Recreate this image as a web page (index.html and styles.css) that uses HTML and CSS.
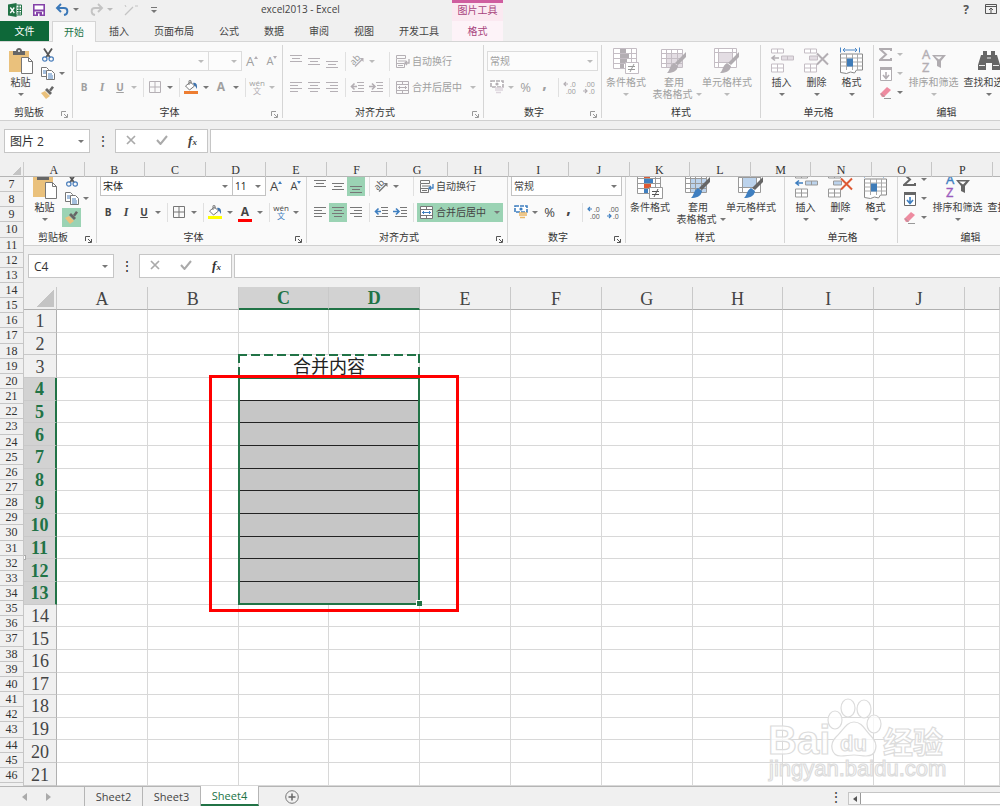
FILE: index.html
```html
<!DOCTYPE html>
<html lang="zh-CN">
<head>
    <meta charset="UTF-8">
    <meta name="viewport" content="width=device-width, initial-scale=1.0">
    <title>excel2013 - Excel</title>
    <link rel="stylesheet" href="styles.css">
</head>
<body>
    <!-- Icon set -->
    <svg class="icon-defs" aria-hidden="true">
        <symbol id="i-paste" viewBox="0 0 24 26">
            <path d="M0 3h20v21H0z" fill="#eac17c"/>
            <path d="M4 3h3c0-4 6-4 6 0h3v4H4z" fill="#666"/><circle cx="10" cy="3" r="1" fill="#fff"/>
            <path d="M12.500 9.500h7l4 4v12h-11z" fill="#fff" stroke="#777"/><path d="M19.500 9.500v4h4" fill="none" stroke="#777"/>
        </symbol>
        <symbol id="i-cut" viewBox="0 0 12 14">
            <path d="M2 .5l6 9M10 .5l-6 9" stroke="#555" stroke-width="1.800"/>
            <circle cx="2.800" cy="11" r="2.200" fill="none" stroke="#4a7ebb" stroke-width="1.200"/><circle cx="9.200" cy="11" r="2.200" fill="none" stroke="#4a7ebb" stroke-width="1.200"/>
        </symbol>
        <symbol id="i-copy" viewBox="0 0 14 13">
            <path d="M.5.500h5l2 2v7h-7z" fill="#fff" stroke="#777"/><path d="M2 4h3M2 6h3" stroke="#4a7ebb"/>
            <path d="M5.500 3.500h5l3 3v6h-8z" fill="#fff" stroke="#777"/><path d="M7 7h4M7 9h5M7 11h5" stroke="#4a7ebb"/>
        </symbol>
        <symbol id="i-painter" viewBox="0 0 14 13">
            <path d="M0 7l4-2 5 5-4 3z" fill="#eac17c"/><path d="M4 4l2-2 5 5-2 2z" fill="#666"/><path d="M8 4l3-4 2 1.500-3 4z" fill="#666"/>
        </symbol>
        <symbol id="i-border" viewBox="0 0 12 12"><path d="M.5.500h11v11H.5zM6 .5v11M.5 6h11" fill="none" stroke="var(--ink)"/></symbol>
        <symbol id="i-bucket" viewBox="0 0 14 14">
            <path d="M1.500 6l5-4 4 4-5 4z" fill="#fff" stroke="#777"/><path d="M5 5V1c0-1 2-1 2 0v3" fill="none" stroke="#777"/>
            <path d="M9 3c3-1 4.500 1 4 6-1-1-1-3-2.500-3z" fill="#3f73ad"/><path d="M0 11h14v3H0z" fill="var(--fill)"/>
        </symbol>
        <symbol id="i-top" viewBox="0 0 13 13"><path d="M0 .5h12M2 3.500h8M0 6.500h12" stroke="var(--ink)"/></symbol>
        <symbol id="i-middle" viewBox="0 0 13 13"><path d="M0 3.500h12M2 6.500h8M0 9.500h12" stroke="var(--ink)"/></symbol>
        <symbol id="i-bottom" viewBox="0 0 13 13"><path d="M0 6.500h12M2 9.500h8M0 12.500h12" stroke="var(--ink)"/></symbol>
        <symbol id="i-left" viewBox="0 0 13 13"><path d="M0 1.500h12M0 4.500h8M0 7.500h12M0 10.500h8" stroke="var(--ink)"/></symbol>
        <symbol id="i-center" viewBox="0 0 13 13"><path d="M0 1.500h12M2 4.500h8M0 7.500h12M2 10.500h8" stroke="var(--ink)"/></symbol>
        <symbol id="i-right" viewBox="0 0 13 13"><path d="M0 1.500h12M4 4.500h8M0 7.500h12M4 10.500h8" stroke="var(--ink)"/></symbol>
        <symbol id="i-outdent" viewBox="0 0 14 12"><path d="M7 1.500h7M8 4.500h6M8 7.500h6M2 10.500h12" stroke="var(--ink)"/><path d="M7 5.500H2M4.500 2.500l-3 3 3 3" fill="none" stroke="var(--accent)" stroke-width="1.600"/></symbol>
        <symbol id="i-indent" viewBox="0 0 14 12"><path d="M7 1.500h7M8 4.500h6M8 7.500h6M2 10.500h12" stroke="var(--ink)"/><path d="M0 5.500h5M3 2.500l3 3-3 3" fill="none" stroke="var(--accent)" stroke-width="1.600"/></symbol>
        <symbol id="i-wrap" viewBox="0 0 14 13">
            <path d="M.5.500h9v3h-9zM.5 8.500h8v4h-8zM.5 4v5" fill="none" stroke="var(--ink)"/><path d="M2 6h8M2 10.500h5" stroke="var(--ink)"/>
            <path d="M13 4v4H9M11 6L9 8l2 2" fill="none" stroke="var(--accent)" stroke-width="1.300"/>
        </symbol>
        <symbol id="i-merge" viewBox="0 0 14 13">
            <path d="M.5.500h12v12H.5zM.5 3.500h12M.5 9.500h12M6.500.500v3M6.500 9.500v3" fill="var(--paper)" stroke="var(--ink)"/>
            <path d="M2 6.500h9M4 5L2.500 6.500 4 8M9 5l1.500 1.500L9 8" fill="none" stroke="var(--accent)"/>
        </symbol>
        <symbol id="i-money" viewBox="0 0 14 14">
            <path d="M1 1h12v6H1z" fill="#fff" stroke="var(--accent)" stroke-width="1.600" stroke-dasharray="4 1"/><circle cx="7" cy="4" r="1.600" fill="var(--accent)"/>
            <path d="M5 8h8M5 10h8M6 12.500h5" stroke="var(--coin)" stroke-width="1.600"/>
        </symbol>
        <symbol id="i-cond" viewBox="0 0 26 26">
            <path d="M.5.500h23v20H.5zM.5 5.500h23M.5 10.500h23M.5 15.500h23M7.500.500v20M18.500.500v20" fill="#fff" stroke="var(--line)"/>
            <path d="M7 1h6v4H7zM7 11h7v4H7z" fill="var(--hot)"/><path d="M7 6h9v4H7zM7 16h4v4H7z" fill="var(--accent)"/>
            <path d="M12.500 14.500h13v11h-13z" fill="#fff" stroke="var(--line)"/><path d="M15 18.500h7M15 21.500h7M21 16l-4 8" stroke="var(--dark)"/>
        </symbol>
        <symbol id="i-tstyle" viewBox="0 0 26 26">
            <path d="M.5 1.500h21v18H.5z" fill="#fff" stroke="var(--line)"/><path d="M5 6h16v13H5z" fill="var(--soft)"/>
            <path d="M.5 5.500h21M.5 10.500h21M.5 15.500h21M5.500 1.500v18M10.500 1.500v18M16.500 1.500v18" stroke="var(--line)"/>
            <path d="M25 4v5l-8 8-3-2z" fill="var(--brush)"/><path d="M13 15l4 3c-1 6-6 7-11 7 3-2 2-7 7-10z" fill="var(--accent)"/>
        </symbol>
        <symbol id="i-cstyle" viewBox="0 0 26 26">
            <path d="M.5.500h22v19H.5z" fill="#fff" stroke="var(--line)"/><path d="M4.500 4.500h14v10h-14z" fill="var(--soft)" stroke="var(--line)"/>
            <path d="M.5 4.500h4M.5 14.500h4M18 4.500h4M4.500.500v4M18.500.500v4M4.500 14v5" stroke="var(--line)"/>
            <path d="M25 4v5l-8 8-3-2z" fill="var(--brush)"/><path d="M13 15l4 3c-1 6-6 7-11 7 3-2 2-7 7-10z" fill="var(--accent)"/>
        </symbol>
        <symbol id="i-insert" viewBox="0 0 24 25">
            <path d="M1.500.500h12v4h-12zM7.500.500v4M1.500 15.500h12v8h-12zM7.500 15.500v8M1.500 19.500h12" fill="#fff" stroke="var(--line)"/>
            <path d="M11.500 7.500h12v4h-12zM17.500 7.500v4" fill="var(--soft)" stroke="var(--line)"/><path d="M9 9.500H3M5 7l-3 2.500L5 12" fill="none" stroke="var(--accent)" stroke-width="1.600"/>
        </symbol>
        <symbol id="i-delete" viewBox="0 0 26 25">
            <path d="M.5.500h12v4H.5zM6.500.500v4M.5 15.500h12v8H.5zM6.500 15.500v8M.5 19.500h12" fill="#fff" stroke="var(--line)"/>
            <path d="M5.500 7.500h8v4h-8z" fill="var(--soft)" stroke="var(--line)"/><path d="M13 5l11 11M24 5L13 16" stroke="var(--hot)" stroke-width="2"/>
        </symbol>
        <symbol id="i-format" viewBox="0 0 24 27">
            <path d="M.5 0v5M19.500 0v5M3 2.500h14M5 .5l-2 2 2 2M15 .5l2 2-2 2" fill="none" stroke="#4a86c5"/>
            <path d="M.5 6.500h22v16l-6 0-2 3-4-1-4 1.500-6-1z" fill="#fff" stroke="#888"/><path d="M.5 10.500h22M.5 14.500h22M.5 18.500h22M6.500 6.500v16M12.500 6.500v16M17.500 6.500v16" stroke="#aaa"/>
            <path d="M7 11h6v8H7z" fill="#3f7cb8"/>
        </symbol>
        <symbol id="i-sum" viewBox="0 0 13 13"><path d="M12 3V1H1l6 5.500L1 12h11v-2" fill="none" stroke="var(--brush)" stroke-width="2"/></symbol>
        <symbol id="i-filldown" viewBox="0 0 12 14"><path d="M.5.500h11v13H.5z" fill="#fff" stroke="var(--brush)"/><path d="M0 0h12v3H0z" fill="var(--brush)"/><path d="M6 5v6M3 8l3 3.500L9 8" fill="none" stroke="var(--accent)" stroke-width="1.600"/></symbol>
        <symbol id="i-eraser" viewBox="0 0 12 12"><path d="M0 7l7-7 4 3-7 7H2z" fill="#ee8ba0"/><path d="M1 6.500l3.500 3.500M4 11.500h7" stroke="#999"/></symbol>
        <symbol id="i-find" viewBox="0 0 24 22">
            <path d="M6 1h4v4h4V1h4v4h2l3 10v5h-8v-7h-6v7H1v-5L4 5h2z" fill="#666"/><path d="M2 15.500h6M16 15.500h6M10 8h4" stroke="#eee"/>
        </symbol>
        <symbol id="i-launch" viewBox="0 0 7 7"><path d="M.5 5V.5H5M3 3l3 3M6.500 3v3.500H3" fill="none" stroke="var(--dark)"/></symbol>
        <symbol id="i-cross" viewBox="0 0 10 10"><path d="M1 1l8 8M9 1L1 9" stroke="#aaa" stroke-width="1.700"/></symbol>
        <symbol id="i-check" viewBox="0 0 12 10"><path d="M1 5l3.500 4L11 1" fill="none" stroke="#aaa" stroke-width="2"/></symbol>
    </svg>

    <header class="titlebar">
        <div class="quick-access">
            <svg width="14" height="14" viewBox="0 0 14 14" role="img" aria-label="Excel"><path d="M8 2h5.500v10H8" fill="#fff" stroke="#217346"/><path d="M9 5h4M9 7.500h4M9 10h4M11 2v10" stroke="#217346"/><path d="M0 1.500L8.500 0v14L0 12.500z" fill="#217346"/><path d="M2.300 4.500l4 5.500M6.300 4.500l-4 5.500" stroke="#fff" stroke-width="1.300"/></svg>
            <button type="button" aria-label="保存"><svg width="12" height="12" viewBox="0 0 12 12"><path d="M.8.800h10.400v10.400H.8z" fill="#fff" stroke="#8442a8" stroke-width="1.600"/><path d="M1 5.500h10v2H1z" fill="#8442a8"/><path d="M3 8h6v4H3z" fill="#8442a8"/><path d="M5 9.500h1.500V12H5z" fill="#fff"/></svg></button>
            <button type="button" aria-label="撤消" class="undo"><svg width="13" height="12" viewBox="0 0 13 12"><path d="M5 0L1 4l4 4M1.500 4H8c4.500 0 4.500 6 0 7" fill="none" stroke="#3b78b8" stroke-width="1.900"/></svg><i class="arrow"></i></button>
            <button type="button" aria-label="恢复" class="redo"><svg width="13" height="12" viewBox="0 0 13 12"><path d="M8 0l4 4-4 4M11.500 4H5C.5 4 .5 10 5 11" fill="none" stroke="#c4c4c4" stroke-width="1.900"/></svg><i class="arrow faint"></i></button>
            <svg width="14" height="12" viewBox="0 0 14 12"><path d="M1 11l8-8" stroke="#c4c4c4" stroke-width="1.300"/><path d="M1 1l1 2M11 2h3" stroke="#c4c4c4"/></svg>
            <button type="button" aria-label="自定义快速访问工具栏" class="customize"><i class="arrow"></i></button>
        </div>
        <h1 class="title">excel2013 - Excel</h1>
        <div class="context-title">图片工具</div>
        <div class="window-buttons">
            <button type="button" aria-label="帮助">?</button>
            <button type="button" aria-label="功能区显示选项"><svg width="12" height="10" viewBox="0 0 12 10"><path d="M.5.500h11v9H.5zM.5 2.500h11" fill="none" stroke="#555"/><path d="M6 4v5M4 6l2-2 2 2" fill="none" stroke="#555"/></svg></button>
        </div>
    </header>

    <nav class="tabs">
        <button type="button" class="file-tab">文件</button>
        <button type="button" class="tab active">开始</button>
        <button type="button" class="tab">插入</button>
        <button type="button" class="tab">页面布局</button>
        <button type="button" class="tab">公式</button>
        <button type="button" class="tab">数据</button>
        <button type="button" class="tab">审阅</button>
        <button type="button" class="tab">视图</button>
        <button type="button" class="tab">开发工具</button>
        <button type="button" class="tab context-tab">格式</button>
    </nav>

    <div class="ribbon dimmed" data-font="" data-size=""></div>

    <div class="formula-bar">
        <label class="name-box"><input type="text" value="图片 2" aria-label="名称框"><i class="arrow"></i></label>
        <span class="dots">⋮</span>
        <div class="formula-buttons">
            <button type="button" aria-label="取消"><svg width="10" height="10"><use href="#i-cross"/></svg></button>
            <button type="button" aria-label="输入"><svg width="12" height="10"><use href="#i-check"/></svg></button>
            <button type="button" class="fx" aria-label="插入函数">f<sub>x</sub></button>
        </div>
        <input type="text" class="formula-input" aria-label="编辑栏">
    </div>

    <main class="sheet">
        <div class="corner"></div>
        <div class="col-heads" id="colHeads"></div>
        <div class="row-heads" id="rowHeads"></div>

        <!-- Inserted picture: a second Excel window -->
        <div class="picture">
            <div class="ribbon-clip">
                <div class="ribbon" data-font="宋体" data-size="11"></div>
            </div>
            <div class="formula-bar">
                <label class="name-box"><input type="text" value="C4" aria-label="名称框"><i class="arrow"></i></label>
                <span class="dots">⋮</span>
                <div class="formula-buttons">
                    <button type="button" aria-label="取消"><svg width="10" height="10"><use href="#i-cross"/></svg></button>
                    <button type="button" aria-label="输入"><svg width="12" height="10"><use href="#i-check"/></svg></button>
                    <button type="button" class="fx" aria-label="插入函数">f<sub>x</sub></button>
                </div>
                <input type="text" class="formula-input" aria-label="编辑栏">
            </div>
            <div class="grid-wrap">
                <table class="grid" id="grid"></table>
            </div>
            <svg class="watermark" width="184" height="92" viewBox="0 0 184 92">
                <g fill="#fff" fill-opacity=".75" stroke="#dcdcdc" stroke-width="1.200">
                    <text x="2" y="58" class="mark-latin" font-size="40">Bai</text>
                    <ellipse cx="69" cy="24" rx="7" ry="9"/><ellipse cx="82" cy="12" rx="7" ry="9"/><ellipse cx="98" cy="13" rx="7" ry="9"/><ellipse cx="108" cy="28" rx="7" ry="9"/>
                    <path d="M88 26c8 0 11 8 17 14 8 8 6 20-5 20-5 0-7-1-12-1s-8 1-13 1c-10 0-12-12-5-19 7-6 10-15 18-15z"/>
                    <text x="74" y="55" class="mark-latin" font-size="22">du</text>
                    <text x="117" y="57" class="mark-cjk" font-size="30">经验</text>
                    <text x="3" y="80" font-size="22" class="mark-url">jingyan.baidu.com</text>
                </g>
            </svg>
            <i class="handle"></i>
        </div>
    </main>

    <footer class="sheet-bar">
        <button type="button" class="nav" aria-label="上一张"><svg width="5" height="8"><path d="M5 0v8L0 4z" fill="#aaa"/></svg></button>
        <button type="button" class="nav" aria-label="下一张"><svg width="5" height="8"><path d="M0 0v8l5-4z" fill="#aaa"/></svg></button>
        <div class="sheet-tabs">
            <button type="button" class="sheet-tab">Sheet2</button>
            <button type="button" class="sheet-tab">Sheet3</button>
            <button type="button" class="sheet-tab current">Sheet4</button>
        </div>
        <button type="button" class="add-sheet" aria-label="新工作表"><svg width="14" height="14" viewBox="0 0 14 14"><circle cx="7" cy="7" r="6.300" fill="none" stroke="#777"/><path d="M7 3.500v7M3.500 7h7" stroke="#666" stroke-width="1.500"/></svg></button>
        <span class="dots">⋮</span>
        <div class="scrollbar"><button type="button" aria-label="向左滚动"><svg width="4" height="6"><path d="M4 0v6L0 3z" fill="#555"/></svg></button></div>
    </footer>

    <template id="ribbonTemplate">
        <section class="group clipboard">
            <div class="group-body">
                <button type="button" class="big"><svg width="24" height="26"><use href="#i-paste"/></svg><span>粘贴</span><i class="arrow"></i></button>
                <div class="stack">
                    <div><button type="button" class="tool" aria-label="剪切"><svg width="12" height="14"><use href="#i-cut"/></svg></button></div>
                    <div><button type="button" class="tool" aria-label="复制"><svg width="14" height="13"><use href="#i-copy"/></svg></button><i class="arrow"></i></div>
                    <div><button type="button" class="tool on" aria-label="格式刷"><svg width="14" height="13"><use href="#i-painter"/></svg></button></div>
                </div>
            </div>
            <h2>剪贴板</h2><svg class="launch"><use href="#i-launch"/></svg>
        </section>
        <section class="group font muted">
            <div class="row">
                <label class="combo font-name"><select aria-label="字体"><option></option></select><i class="arrow"></i></label>
                <label class="combo font-size"><select aria-label="字号"><option></option></select><i class="arrow"></i></label>
                <button type="button" class="tool grow" aria-label="增大字号">A<i class="tip up"></i></button>
                <button type="button" class="tool shrink" aria-label="减小字号">A<i class="tip"></i></button>
            </div>
            <div class="row">
                <button type="button" class="tool bold">B</button>
                <button type="button" class="tool italic">I</button>
                <button type="button" class="tool underline">U</button><i class="arrow"></i>
                <span class="sep"></span>
                <button type="button" class="tool wide" aria-label="边框"><svg width="12" height="12"><use href="#i-border"/></svg></button><i class="arrow dark"></i>
                <span class="sep"></span>
                <button type="button" class="tool wide" aria-label="填充颜色"><svg width="14" height="14"><use href="#i-bucket"/></svg></button><i class="arrow dark"></i>
                <button type="button" class="tool wide font-color">A</button><i class="arrow dark"></i>
                <span class="sep"></span>
                <button type="button" class="tool wide pinyin"><span>wén</span><span>文</span></button><i class="arrow"></i>
            </div>
            <h2>字体</h2><svg class="launch"><use href="#i-launch"/></svg>
        </section>
        <section class="group align muted">
            <div class="row">
                <button type="button" class="tool" aria-label="顶端对齐"><svg width="13" height="13"><use href="#i-top"/></svg></button>
                <button type="button" class="tool" aria-label="垂直居中"><svg width="13" height="13"><use href="#i-middle"/></svg></button>
                <button type="button" class="tool on" aria-label="底端对齐"><svg width="13" height="13"><use href="#i-bottom"/></svg></button>
                <span class="sep"></span>
                <button type="button" class="tool wide" aria-label="方向">
                    <svg width="14" height="14" viewBox="0 0 14 14">
                        <text x="0" y="9" font-size="9" transform="rotate(-45 5 6)" fill="var(--dark)">ab</text>
                        <path d="M5 12.500l7-7" stroke="var(--ink)" stroke-width="1.500"/><path d="M13.500 4v4l-4-4z" fill="var(--ink)"/>
                    </svg>
                </button><i class="arrow"></i><span class="fill"></span>
                <span class="sep"></span>
                <button type="button" class="text-tool"><svg width="14" height="13"><use href="#i-wrap"/></svg>自动换行</button>
            </div>
            <div class="row">
                <button type="button" class="tool" aria-label="左对齐"><svg width="13" height="13"><use href="#i-left"/></svg></button>
                <button type="button" class="tool on" aria-label="居中"><svg width="13" height="13"><use href="#i-center"/></svg></button>
                <button type="button" class="tool" aria-label="右对齐"><svg width="13" height="13"><use href="#i-right"/></svg></button>
                <span class="sep"></span>
                <button type="button" class="tool wide" aria-label="减少缩进量"><svg width="14" height="12"><use href="#i-outdent"/></svg></button>
                <button type="button" class="tool" aria-label="增加缩进量"><svg width="14" height="12"><use href="#i-indent"/></svg></button><span class="fill"></span>
                <span class="sep"></span>
                <button type="button" class="text-tool on"><svg width="14" height="13"><use href="#i-merge"/></svg>合并后居中<i class="arrow"></i></button>
            </div>
            <h2>对齐方式</h2><svg class="launch"><use href="#i-launch"/></svg>
        </section>
        <section class="group number muted">
            <div class="row">
                <label class="combo number-format"><select aria-label="数字格式"><option>常规</option></select><i class="arrow"></i></label>
            </div>
            <div class="row">
                <button type="button" class="tool" aria-label="会计数字格式"><svg width="14" height="14"><use href="#i-money"/></svg></button><i class="arrow"></i>
                <button type="button" class="tool percent">%</button>
                <button type="button" class="tool comma">,</button>
                <span class="sep"></span>
                <button type="button" class="tool" aria-label="增加小数位数">
                    <svg width="14" height="13" viewBox="0 0 14 13">
                        <path d="M5 3H1M3 1L1 3l2 2" fill="none" stroke="var(--accent)" stroke-width="1.200"/>
                        <text x="7" y="6" font-size="7" fill="var(--dark)">.0</text><text x="3" y="13" font-size="7" fill="var(--dark)">.00</text>
                    </svg>
                </button>
                <button type="button" class="tool" aria-label="减少小数位数">
                    <svg width="14" height="13" viewBox="0 0 14 13">
                        <text x="3" y="6" font-size="7" fill="var(--dark)">.00</text><text x="7" y="13" font-size="7" fill="var(--dark)">.0</text>
                        <path d="M1 10h4M3 8l2 2-2 2" fill="none" stroke="var(--accent)" stroke-width="1.200"/>
                    </svg>
                </button>
            </div>
            <h2>数字</h2><svg class="launch"><use href="#i-launch"/></svg>
        </section>
        <section class="group style muted">
            <div class="group-body">
                <button type="button" class="big"><svg width="26" height="26"><use href="#i-cond"/></svg><span>条件格式</span><i class="arrow"></i></button>
                <button type="button" class="big"><svg width="26" height="26"><use href="#i-tstyle"/></svg><span>套用</span><span class="two-line">表格格式<i class="arrow"></i></span></button>
                <button type="button" class="big wide"><svg width="26" height="26"><use href="#i-cstyle"/></svg><span>单元格样式</span><i class="arrow"></i></button>
            </div>
            <h2>样式</h2>
        </section>
        <section class="group cells">
            <div class="group-body">
                <button type="button" class="big"><svg width="24" height="25"><use href="#i-insert"/></svg><span>插入</span><i class="arrow"></i></button>
                <button type="button" class="big"><svg width="26" height="25"><use href="#i-delete"/></svg><span>删除</span><i class="arrow"></i></button>
                <button type="button" class="big"><svg width="24" height="27"><use href="#i-format"/></svg><span>格式</span><i class="arrow"></i></button>
            </div>
            <h2>单元格</h2>
        </section>
        <section class="group edit">
            <div class="group-body">
                <div class="stack">
                    <div class="muted"><button type="button" class="tool" aria-label="自动求和"><svg width="13" height="13"><use href="#i-sum"/></svg></button><i class="arrow"></i></div>
                    <div class="muted"><button type="button" class="tool" aria-label="填充"><svg width="12" height="14"><use href="#i-filldown"/></svg></button><i class="arrow"></i></div>
                    <div><button type="button" class="tool" aria-label="清除"><svg width="12" height="12"><use href="#i-eraser"/></svg></button><i class="arrow"></i></div>
                </div>
                <button type="button" class="big muted">
                    <svg width="26" height="26" viewBox="0 0 26 26">
                        <text x="1" y="11" font-size="13" fill="var(--accent)" stroke="var(--accent)" stroke-width=".4">A</text>
                        <text x="1" y="24" font-size="13" fill="var(--purple)" stroke="var(--purple)" stroke-width=".4">Z</text>
                        <path d="M11 7h14l-5 6v7l-4-2v-5z" fill="var(--brush)"/><path d="M14 8.500h7l-3 3z" fill="var(--paper)"/>
                    </svg><span>排序和筛选</span><i class="arrow"></i>
                </button>
                <button type="button" class="big"><svg width="24" height="22"><use href="#i-find"/></svg><span>查找和选择</span><i class="arrow"></i></button>
            </div>
            <h2>编辑</h2>
        </section>
    </template>

    <script src="script.js"></script>
</body>
</html>
```
FILE: styles.css
```css
* {
    margin: 0;
    padding: 0;
    box-sizing: border-box;
}

body {
    display: flex;
    flex-direction: column;
    height: 100vh;
    overflow: hidden;
    font-family: "Open Sans", "Noto Sans CJK SC", sans-serif;
    font-size: 10px;
    line-height: 12px;
    color: #444;
    background: #f0f0f0;
}

button, input, select {
    font: inherit;
    color: inherit;
    background: none;
    border: none;
    border-radius: 0;
    outline: none;
    appearance: none;
    white-space: nowrap;
}

svg {
    flex: none;
    overflow: visible;
}

.icon-defs {
    position: absolute;
    width: 0;
    height: 0;
}

.arrow {
    flex: none;
    width: 0;
    height: 0;
    border: 3px solid transparent;
    border-top-color: #777;
    border-bottom: none;
}

.arrow.faint {
    border-top-color: #bbb;
}

/* Title bar */
.titlebar {
    display: flex;
    height: 21px;
}

.quick-access {
    display: flex;
    align-items: center;
    gap: 11px;
    width: 261px;
    height: 19px;
    padding-left: 8px;
}

.quick-access button {
    display: flex;
    align-items: center;
    gap: 4px;
}

.quick-access .customize {
    margin-left: 2px;
    padding-top: 2px;
    border-top: 1px solid #777;
}

.title {
    width: 191px;
    font-size: 10px;
    font-weight: normal;
    line-height: 19px;
}

.context-title {
    width: 51px;
    border-top: 3px solid #cf5d9f;
    background: #fbe9f1;
    color: #a8447d;
    line-height: 15px;
    text-align: center;
}

.window-buttons {
    display: flex;
    align-items: center;
    gap: 16px;
    height: 19px;
    margin-left: auto;
    padding-right: 3px;
    font-size: 12px;
    font-weight: bold;
    color: #555;
}

/* Ribbon tabs */
.tabs {
    display: flex;
    gap: 1px;
    height: 21px;
    border-bottom: 1px solid #d5d5d5;
}

.file-tab {
    width: 49px;
    margin-right: 2px;
    background: #0e6839;
    color: #fff;
}

.tab {
    padding: 0 12px;
}

.tab.active {
    height: 21px;
    border: 1px solid #d5d5d5;
    border-bottom: none;
    padding: 0 11px;
    background: #fafafa;
    color: #217346;
}

.context-tab {
    width: 51px;
    background: #fdf3f8;
    color: #a8447d;
}

/* Ribbon */
.ribbon {
    --ink: #777;
    --dark: #555;
    --line: #999;
    --brush: #666;
    --accent: #3f7fc0;
    --soft: #bcd3ec;
    --hot: #dd5a34;
    --coin: #eab766;
    --purple: #9a5bbd;
    --fill: #ffff00;
    --paper: #fff;
    --muted: #444;
    --arrow: #777;
    --combo: #c3c3c3;
    display: flex;
    flex: none;
    height: 79px;
    overflow: hidden;
    background: #fafafa;
    border-bottom: 1px solid #d0d0d0;
}

.ribbon.dimmed {
    --ink: #b5b0b5;
    --dark: #999;
    --line: #c4bdc4;
    --brush: #b0acb0;
    --accent: #b3aeb3;
    --soft: #e3dde3;
    --hot: #b3aeb3;
    --coin: #ddd5dd;
    --purple: #b3aeb3;
    --fill: #ed7d31;
    --paper: #fafafa;
    --muted: #a0a0a0;
    --arrow: #bbb;
    --combo: #dcdcdc;
}

.group {
    position: relative;
    display: flex;
    flex: none;
    flex-direction: column;
    height: 73px;
    margin-top: 3px;
    border-right: 1px solid #d5d5d5;
}

.group h2 {
    margin-top: auto;
    font-size: 10px;
    font-weight: normal;
    line-height: 12px;
    text-align: center;
    color: #333;
}

.launch {
    position: absolute;
    right: 4px;
    bottom: 0;
    width: 7px;
    height: 7px;
}

.muted {
    color: var(--muted);
}

.muted .arrow {
    border-top-color: var(--arrow);
}

.muted .arrow.dark {
    border-top-color: #777;
}

.clipboard { width: 73px; padding-left: 3px; }
.font { width: 210px; padding-left: 2px; }
.align { width: 201px; padding-left: 4px; }
.number { width: 118px; padding-left: 3px; }
.style { width: 159px; }
.cells { width: 113px; padding-left: 3px; }
.edit { width: 143px; padding-left: 2px; border-right: none; }

.clipboard h2 { padding-right: 17px; }
.font h2 { padding-right: 18px; }
.align h2 { padding-right: 20px; }
.number h2 { padding-right: 20px; }

.group-body {
    display: flex;
}

.big {
    display: flex;
    flex: none;
    flex-direction: column;
    align-items: center;
    height: 60px;
}

.big svg {
    height: 28px;
    margin: 2px 0 1px;
}

.big .arrow {
    margin-top: 5px;
}

.two-line {
    display: flex;
    align-items: center;
    gap: 3px;
    margin-left: 6px;
}

.two-line .arrow {
    margin-top: 0;
}

.clipboard .big { width: 35px; }
.style .big { width: 48px; }
.style .big.wide { width: 58px; }
.cells .big { width: 35px; }
.edit .big { width: 55px; }

.stack > div {
    display: flex;
    align-items: center;
    height: 19px;
}

.stack .arrow {
    margin-left: 2px;
}

.edit .stack {
    flex: none;
    width: 30px;
}

.row {
    display: flex;
    align-items: center;
    height: 20px;
    margin-top: 6px;
}

.tool {
    display: flex;
    align-items: center;
    justify-content: center;
    flex: none;
    width: 19px;
    height: 19px;
}

.row .tool {
    width: 18px;
}

.row .tool.wide {
    width: 20px;
}

.number .row .tool {
    width: 19px;
}

.row > .arrow {
    margin: 0 2px;
}

.ribbon:not(.dimmed) .on {
    background: #9bd3b4;
}

.sep {
    width: 1px;
    height: 19px;
    margin: 0 1px 0 4px;
    background: #e0e0e0;
}

.combo {
    display: flex;
    align-items: center;
    height: 20px;
    padding-right: 4px;
    border: 1px solid var(--combo);
    background: #fff;
}

.dimmed .combo {
    background: #fcfcfc;
}

.combo select {
    flex: 1;
    min-width: 0;
    padding-left: 2px;
}

.font .combo {
    color: #222;
}

.font-name { width: 133px; margin-left: 1px; }
.font-size { width: 34px; margin-left: -1px; }
.number-format { width: 111px; }

.font .grow,
.font .shrink {
    width: 20px;
}

.grow {
    font-size: 13px;
}

.shrink {
    font-size: 11px;
}

/* Little triangle beside the letter */
.tip {
    align-self: flex-start;
    margin-top: 4px;
    border: 2px solid transparent;
    border-top: 3px solid var(--accent);
    border-bottom: none;
}

.tip.up {
    border-top: none;
    border-bottom: 3px solid var(--accent);
}

.bold {
    font-weight: bold;
}

.italic {
    font-family: "Liberation Serif", serif;
    font-size: 12px;
    font-style: italic;
    font-weight: bold;
}

.underline {
    font-weight: bold;
    text-decoration: underline;
}

.font-color {
    font-size: 12px;
    font-weight: bold;
}

.ribbon:not(.dimmed) .font-color {
    background: linear-gradient(#f00, #f00) center 16px / 14px 3px no-repeat;
}

.pinyin {
    flex-direction: column;
    font-size: 8px;
    line-height: 8px;
}

.pinyin span:last-child {
    color: var(--accent);
}

.text-tool {
    display: flex;
    align-items: center;
    gap: 2px;
    height: 19px;
    margin-left: 2px;
    padding: 0 3px;
}

.text-tool .arrow {
    margin-left: 6px;
}

.align .fill {
    flex: none;
    width: 0;
}

.align .row .wide + .arrow + .fill {
    width: 8px;
}

.percent {
    font-size: 13px;
}

.comma {
    padding-bottom: 8px;
    font-size: 16px;
    font-weight: bold;
}

/* Formula bar */
.formula-bar {
    display: flex;
    flex: none;
    height: 41px;
    padding: 8px 0 9px 4px;
}

.name-box {
    display: flex;
    align-items: center;
    width: 86px;
    padding: 0 5px;
    border: 1px solid #c6c6c6;
    background: #fff;
    font-size: 12px;
    color: #333;
}

.name-box input {
    flex: 1;
    min-width: 0;
}

.dots {
    width: 25px;
    font-size: 14px;
    line-height: 24px;
    text-align: center;
}

.formula-buttons {
    display: flex;
    align-items: center;
    justify-content: space-around;
    width: 93px;
    border: 1px solid #c6c6c6;
    background: #fff;
}

.fx {
    font-family: "Liberation Serif", serif;
    font-size: 13px;
    font-style: italic;
    font-weight: bold;
}

.fx sub {
    font-size: 9px;
    line-height: 9px;
    vertical-align: baseline;
}

.formula-input {
    flex: 1;
    margin-left: 2px;
    border: 1px solid #c6c6c6;
    border-right: none;
    background: #fff;
}

/* Outer sheet */
.sheet {
    display: grid;
    flex: 1;
    grid-template-columns: 24px minmax(0, 1fr);
    grid-template-rows: 15px minmax(0, 1fr);
    min-height: 0;
    font-family: "Liberation Serif", serif;
    font-size: 12px;
    color: #333;
}

.corner {
    border-right: 1px solid #ccc;
    border-bottom: 1px solid #b5b5b5;
    background: linear-gradient(135deg, transparent 50%, #c4c4c4 50%) 12px 4px / 9px 9px no-repeat;
}

.col-heads {
    display: grid;
    grid-template-columns: repeat(16, 1fr) 7px;
    border-bottom: 1px solid #b5b5b5;
    line-height: 16px;
    text-align: center;
}

.col-heads span {
    border-right: 1px solid #c6c6c6;
}

.row-heads {
    display: grid;
    grid-auto-rows: minmax(0, 1fr);
    min-height: 0;
    padding-bottom: 3px;
    border-right: 1px solid #c6c6c6;
    line-height: 14px;
    text-align: center;
}

.row-heads span {
    border-bottom: 1px solid #c6c6c6;
}

/* Picture */
.picture {
    position: relative;
    display: flex;
    flex-direction: column;
    min-height: 0;
    overflow: hidden;
    font-family: "Open Sans", "Noto Sans CJK SC", sans-serif;
    font-size: 10px;
}

.ribbon-clip {
    display: flex;
    flex: none;
    flex-direction: column;
    justify-content: flex-end;
    height: 69px;
    overflow: hidden;
}

.grid-wrap {
    flex: 1;
    min-height: 0;
}

.grid {
    width: 100%;
    height: 100%;
    table-layout: fixed;
    border-spacing: 0;
    font-family: "Liberation Serif", "Noto Sans CJK SC", serif;
    font-size: 18px;
    line-height: 20px;
    text-align: center;
}

.grid th {
    padding-top: 1px;
    border-right: 1px solid #c9c9c9;
    border-bottom: 1px solid #c9c9c9;
    background: #f0f0f0;
    color: #444;
    font-weight: normal;
}

.grid thead th {
    height: 23px;
    border-bottom-color: #b0b0b0;
}

.grid tbody th {
    border-right-color: #b0b0b0;
}

.grid td {
    border-right: 1px solid #d8d8d8;
    border-bottom: 1px solid #d8d8d8;
    background: #fff;
}

.grid .row-col { width: 33px; }
.grid .last-col { width: 35px; }

.grid .select-all {
    background: linear-gradient(135deg, transparent 50%, #c4c4c4 50%) 13px 3px / 17px 17px no-repeat #f0f0f0;
}

.grid th.selected {
    background: #d2d2d2;
    color: #217346;
    font-weight: bold;
}

.grid thead th.selected {
    border-bottom: 2px solid #217346;
}

.grid tbody th.selected {
    border-right: 2px solid #217346;
}

.grid td.copied,
.grid td.start {
    position: relative;
    color: #222;
}

.grid td.copied {
    padding-top: 1px;
}

.grid td.merged {
    border-bottom-color: #222;
}

.grid td.shaded {
    background: #c6c6c6;
}

.marquee {
    position: absolute;
    inset: -1px -1px 0;
    background:
        repeating-linear-gradient(90deg, #217346 0 9px, transparent 9px 13px) top / 100% 2px no-repeat,
        repeating-linear-gradient(#217346 0 9px, transparent 9px 13px) left / 2px 100% no-repeat,
        repeating-linear-gradient(#217346 0 9px, transparent 9px 13px) right / 2px 100% no-repeat;
}

/* Covers the ten selected rows, starting from the first one */
.selection {
    position: absolute;
    z-index: 1;
    top: -1px;
    left: -1px;
    right: -1px;
    height: calc(1000% + 11px);
    border: 2px solid #217346;
}

.selection::after {
    content: "";
    position: absolute;
    right: -4px;
    bottom: -3px;
    width: 5px;
    height: 5px;
    border: 1px solid #fff;
    border-width: 1px 0 0 1px;
    background: #217346;
}

.highlight {
    position: absolute;
    z-index: 2;
    top: -3px;
    left: -30px;
    right: -40px;
    height: calc(1000% + 20px);
    border: 3px solid #f00;
}

.watermark {
    position: absolute;
    right: 50px;
    bottom: -2px;
}

.mark-latin {
    font-family: "Liberation Sans", sans-serif;
    font-weight: bold;
}

.mark-cjk {
    font-family: "Noto Sans CJK SC", sans-serif;
    font-weight: bold;
}

.mark-url {
    font-family: "Liberation Sans", sans-serif;
}

.handle {
    position: absolute;
    top: 62%;
    left: -3px;
    width: 5px;
    height: 5px;
    border: 1px solid #aaa;
    background: #fff;
}

/* Sheet tabs */
.sheet-bar {
    display: flex;
    align-items: center;
    height: 20px;
    padding-left: 12px;
    border-top: 1px solid #b5b5b5;
}

.nav {
    width: 24px;
}

.nav svg {
    display: block;
    margin: auto;
}

.sheet-tabs {
    display: flex;
    align-self: stretch;
    margin-left: 24px;
    border-left: 1px solid #b5b5b5;
}

.sheet-tab {
    width: 58px;
    border-right: 1px solid #b5b5b5;
    font-size: 11px;
}

.sheet-tab.current {
    margin-top: -1px;
    padding-top: 2px;
    border-bottom: 2px solid #217346;
    background: #fff;
    color: #217346;
}

.add-sheet {
    margin-left: 26px;
    height: 14px;
}

.sheet-bar .dots {
    margin-left: auto;
    line-height: 20px;
}

.scrollbar {
    width: 152px;
    height: 13px;
    margin-top: 4px;
    border: 1px solid #c6c6c6;
    border-right: none;
    background: #fff;
}

.scrollbar button {
    display: flex;
    align-items: center;
    justify-content: center;
    width: 12px;
    height: 11px;
    border-right: 1px solid #999;
    background: #f5f5f5;
}
```
FILE: script.js
```js
// Both windows share one ribbon layout
const template = document.getElementById('ribbonTemplate');
document.querySelectorAll('.ribbon').forEach((ribbon) => {
    ribbon.appendChild(template.content.cloneNode(true));
    ribbon.querySelector('.font-name option').textContent = ribbon.dataset.font;
    ribbon.querySelector('.font-size option').textContent = ribbon.dataset.size;
});

// Outer headers
const colHeads = document.getElementById('colHeads');
for (const letter of 'ABCDEFGHIJKLMNOP') {
    colHeads.insertAdjacentHTML('beforeend', `<span>${letter}</span>`);
}

const rowHeads = document.getElementById('rowHeads');
for (let row = 7; row <= 46; row++) {
    rowHeads.insertAdjacentHTML('beforeend', `<span>${row}</span>`);
}

// Inner grid
const columns = 'ABCDEFGHIJ'.split('');
let html = '<thead><tr><th class="row-col select-all"></th>';
columns.forEach((letter) => {
    const selected = letter === 'C' || letter === 'D';
    html += `<th${selected ? ' class="selected"' : ''}>${letter}</th>`;
});
html += '<th class="last-col"></th></tr></thead><tbody>';

for (let row = 1; row <= 21; row++) {
    const selected = row >= 4 && row <= 13;
    html += `<tr><th${selected ? ' class="selected"' : ''}>${row}</th><td></td><td></td>`;
    if (row === 3) {
        html += '<td colspan="2" class="copied">合并内容<span class="marquee"></span></td>';
    } else if (row === 4) {
        html += '<td colspan="2" class="merged start"><span class="selection"></span><span class="highlight"></span></td>';
    } else if (selected) {
        html += '<td colspan="2" class="merged shaded"></td>';
    } else {
        html += '<td></td><td></td>';
    }
    html += '<td></td>'.repeat(7) + '</tr>';
}
document.getElementById('grid').innerHTML = html + '</tbody>';
```
